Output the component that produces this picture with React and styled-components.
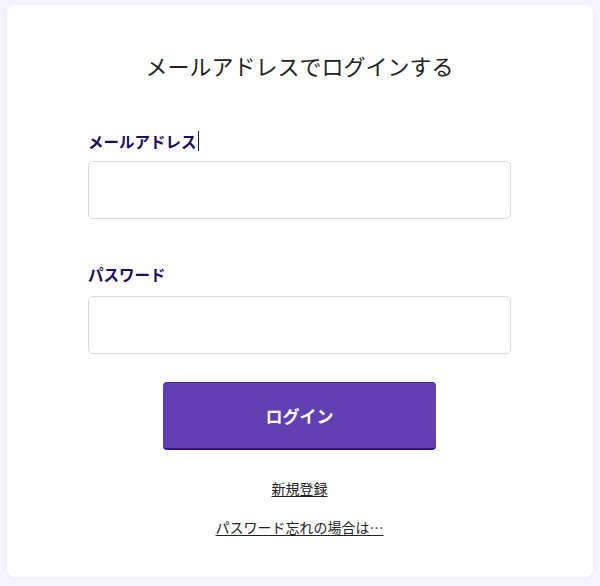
import styled, { createGlobalStyle } from "styled-components";

const GlobalStyle = createGlobalStyle`
  html, body {
    margin: 0;
    padding: 0;
    background: #f6f4ff;
  }
  body {
    font-family: "Noto Sans CJK JP", "Noto Sans", sans-serif;
  }
`;

const Page = styled.div`
  padding: 5px 7px 9px;
`;

const Card = styled.div`
  background: #ffffff;
  border-radius: 8px;
  box-shadow: 0 0 6px rgba(120, 100, 220, 0.08);
  height: 572px;
  box-sizing: border-box;
  padding: 44px 82px 0 81px;
  display: flex;
  flex-direction: column;
`;

const Title = styled.h1`
  margin: 0;
  text-align: center;
  font-size: 22px;
  line-height: 32px;
  font-weight: 400;
  color: #222;
`;

const Field = styled.div`
  display: flex;
  flex-direction: column;
  margin-top: ${(p) => p.$top}px;
`;

const Label = styled.label`
  font-size: 15.5px;
  line-height: 24px;
  font-weight: 700;
  color: #1c0c5c;
  display: flex;
  align-items: center;
`;

const Caret = styled.span`
  display: inline-block;
  width: 1px;
  height: 20px;
  background: #1c0c5c;
  margin-left: 1px;
`;

const Input = styled.input`
  margin-top: ${(p) => p.$gap}px;
  height: 58px;
  box-sizing: border-box;
  border: 1px solid #d9d9d9;
  border-radius: 5px;
  outline: none;
  padding: 0 12px;
  font-size: 16px;
  font-family: inherit;
`;

const Button = styled.button`
  align-self: center;
  margin-top: 28px;
  width: 273px;
  height: 68px;
  background: #6040b0;
  border: none;
  border-top: 1px solid #4a2a9a;
  border-bottom: 2px solid #36178a;
  border-radius: 4px;
  color: #fff;
  font-family: inherit;
  font-size: 17px;
  font-weight: 700;
  cursor: pointer;
`;

const Links = styled.div`
  display: flex;
  flex-direction: column;
  align-items: center;
  gap: 19px;
  margin-top: 28px;
`;

const Link = styled.a`
  font-size: 14px;
  line-height: 20px;
  color: #222;
  text-decoration: underline;
  text-underline-offset: 2px;
`;

const App = () => {
  return (
    <>
      <GlobalStyle />
      <Page>
        <Card>
          <Title>メールアドレスでログインする</Title>
          <Field $top={48}>
            <Label>
              メールアドレス
              <Caret />
            </Label>
            <Input type="email" $gap={8} />
          </Field>
          <Field $top={43}>
            <Label>パスワード</Label>
            <Input type="password" $gap={10} />
          </Field>
          <Button>ログイン</Button>
          <Links>
            <Link href="#">新規登録</Link>
            <Link href="#">パスワード忘れの場合は…</Link>
          </Links>
        </Card>
      </Page>
    </>
  );
};

export default App;
